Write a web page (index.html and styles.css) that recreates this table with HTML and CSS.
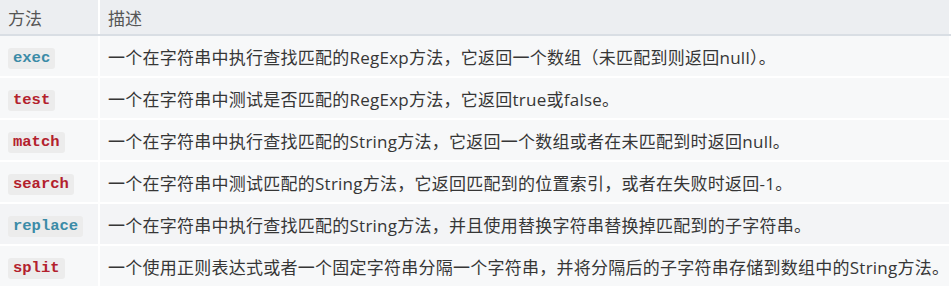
FILE: index.html
```html
<!DOCTYPE html>
<html>
<head>
<meta charset="utf-8">
<link rel="stylesheet" href="styles.css">
</head>
<body>
<table class="methods">
  <colgroup><col class="col1"><col class="col2"></colgroup>
  <thead>
    <tr><th class="c1">方法</th><th class="c2">描述</th></tr>
  </thead>
  <tbody>
    <tr><td class="c1"><code class="blue">exec</code></td><td class="c2">一个在字符串中执行查找匹配的RegExp方法，它返回一个数组（未匹配到则返回null）。</td></tr>
    <tr><td class="c1"><code class="red">test</code></td><td class="c2">一个在字符串中测试是否匹配的RegExp方法，它返回true或false。</td></tr>
    <tr><td class="c1"><code class="red">match</code></td><td class="c2">一个在字符串中执行查找匹配的String方法，它返回一个数组或者在未匹配到时返回null。</td></tr>
    <tr><td class="c1"><code class="red">search</code></td><td class="c2">一个在字符串中测试匹配的String方法，它返回匹配到的位置索引，或者在失败时返回-1。</td></tr>
    <tr><td class="c1"><code class="blue">replace</code></td><td class="c2">一个在字符串中执行查找匹配的String方法，并且使用替换字符串替换掉匹配到的子字符串。</td></tr>
    <tr><td class="c1"><code class="red">split</code></td><td class="c2">一个使用正则表达式或者一个固定字符串分隔一个字符串，并将分隔后的子字符串存储到数组中的String方法。</td></tr>
  </tbody>
</table>
</body>
</html>
```

FILE: styles.css
```css
html, body {
  margin: 0;
  padding: 0;
  background: #ffffff;
}
.methods {
  width: 951px;
  table-layout: fixed;
  border-collapse: collapse;
  font-family: "Open Sans", "Noto Sans CJK SC", sans-serif;
  font-size: 17px;
  color: #363636;
}
.col1 { width: 99px; }
.methods th {
  background: #eceef1;
  color: #555555;
  font-weight: normal;
  text-align: left;
  height: 34px;
  padding: 0 0 0 10px;
  border-bottom: 2px solid #d9dee4;
  border-right: 2px solid #ffffff;
}
.methods td {
  background: #f7f8f9;
  height: 40px;
  padding: 0 0 0 10px;
  border-bottom: 2px solid #ffffff;
  border-right: 2px solid #ffffff;
  white-space: nowrap;
  overflow: visible;
}
.methods tbody tr:nth-child(5) td {
  background: #f3f4f6;
}
.methods .c1 {
  padding-left: 8px;
}
.methods .c2 {
  padding-left: 8px;
}
.methods td.c2 {
  letter-spacing: 0.25px;
}
.methods code {
  display: inline-block;
  font-family: "Liberation Mono", monospace;
  font-weight: bold;
  font-size: 15.5px;
  line-height: 21px;
  padding: 0 5px;
  background: #ececec;
  border-radius: 3px;
}
.blue { color: #3b8ba7; }
.red { color: #b3212c; }
```
